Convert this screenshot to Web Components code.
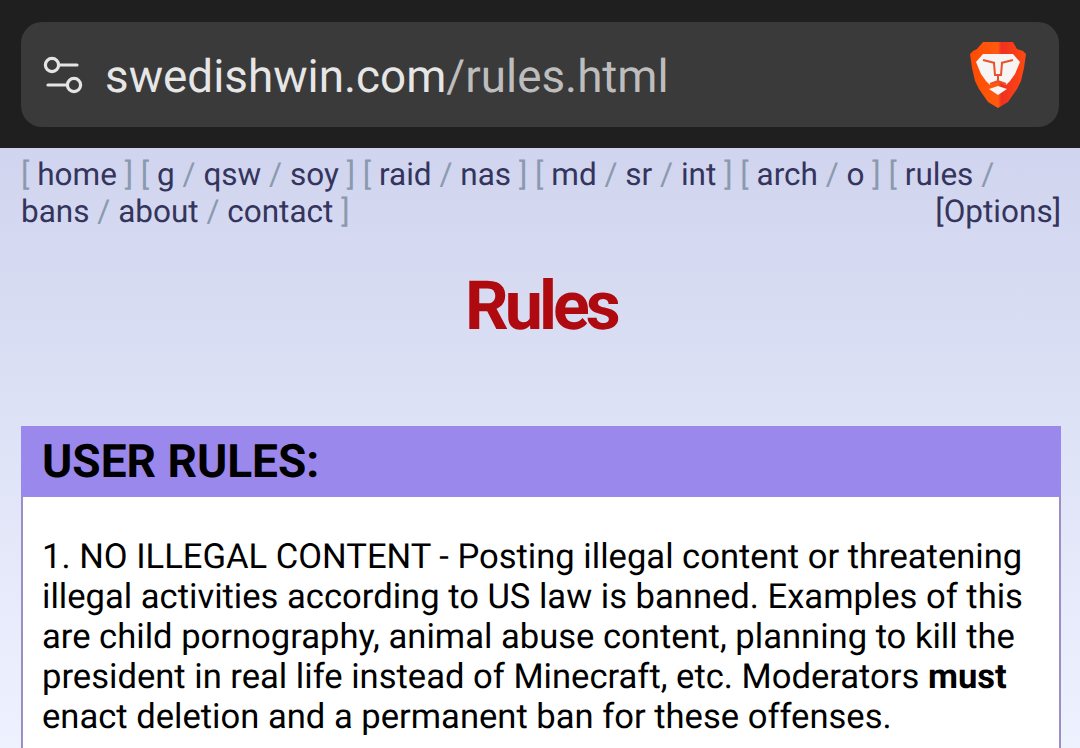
<!DOCTYPE html>
<html lang="en">
<head>
<meta charset="utf-8">
<title>Rules</title>
<style>
  html, body {
    margin: 0;
    padding: 0;
    height: 748px;
    overflow: hidden;
    font-family: Roboto, "Liberation Sans", sans-serif;
    text-rendering: geometricPrecision;
  }
</style>
</head>
<body>
<browser-bar url-host="swedishwin.com" url-path="/rules.html"></browser-bar>
<site-page>
  <board-nav></board-nav>
  <page-title>Rules</page-title>
  <rule-box heading="USER RULES:">
    1. NO ILLEGAL CONTENT - Posting illegal content or threatening illegal activities according to US law is banned. Examples of this are child pornography, animal abuse content, planning to kill the president in real life instead of Minecraft, etc. Moderators <b>must</b> enact deletion and a permanent ban for these offenses.
  </rule-box>
</site-page>

<script>
class BrowserBar extends HTMLElement {
  constructor() {
    super();
    this.shadowDOM = this.attachShadow({ mode: 'open' });
  }

  connectedCallback() {
    this.shadowDOM.innerHTML = `
      <style>
        :host {
          display: block;
          box-sizing: border-box;
          height: 148px;
          padding: 22px 21px 21px;
          background: #1f1f1f;
        }

        .field {
          display: flex;
          align-items: center;
          height: 105px;
          padding: 0 33px 0 22px;
          border-radius: 21px;
          background: #3a3a3a;
          font: 400 45.8px/50px Roboto, sans-serif;
          color: #e6e6e6;
        }

        .tune { flex: none; width: 40px; height: 40px; margin-right: 22px; }
        .url { flex: 1; white-space: nowrap; padding-top: 6px; }
        .path { color: #bdbdbd; }
        .lion { flex: none; width: 56px; height: 67px; }
      </style>
      <div class="field">
        <svg class="tune" viewBox="0 0 40 40" fill="none" stroke="#e4e4e4" stroke-width="3.2" stroke-linecap="round">
          <circle cx="9" cy="10" r="6.6"/>
          <path d="M16 10h18"/>
          <circle cx="31" cy="30" r="6.6"/>
          <path d="M5 30h19"/>
        </svg>
        <div class="url">${this.getAttribute('url-host')}<span class="path">${this.getAttribute('url-path')}</span></div>
        <svg class="lion" viewBox="0 0 56 67">
          <defs>
            <linearGradient id="shield" x1="0" x2="1" y1="0" y2="0">
              <stop offset="0" stop-color="#ff4a00"/>
              <stop offset=".5" stop-color="#ff5a10"/>
              <stop offset=".56" stop-color="#f03020"/>
              <stop offset="1" stop-color="#ff4a10"/>
            </linearGradient>
          </defs>
          <path fill="url(#shield)" d="M13 1h30l4 7 6 2 3 3-2 14-3 13-4 8-9 13-10 6-10-6-9-13-4-8-3-13L0 13l3-3 4-2z"/>
          <path fill="#f7f5f3" d="M13 13h30l7 8-5 12-5 7-4 4-8-4-8 4-4-4-5-7-5-12z"/>
          <path fill="#f7f5f3" d="M19 48l9-3 9 3-9 6z"/>
          <g fill="none" stroke="#e8512a" stroke-width="2">
            <path d="M13 19l12 3M43 19l-12 3"/>
            <path d="M24 22l1 12h6l1-12M28 34v6M20 43l8-3 8 3"/>
          </g>
        </svg>
      </div>
    `;
  }
}

class SitePage extends HTMLElement {
  constructor() {
    super();
    this.shadowDOM = this.attachShadow({ mode: 'open' });
    this.shadowDOM.innerHTML = `
      <style>
        :host {
          display: block;
          box-sizing: border-box;
          height: 600px;
          padding: 8px 19px 0 21px;
          overflow: hidden;
          background: linear-gradient(#d0d4ee, #eef2ff);
        }
      </style>
      <slot></slot>
    `;
  }
}

class BoardNav extends HTMLElement {
  constructor() {
    super();
    this.shadowDOM = this.attachShadow({ mode: 'open' });
  }

  connectedCallback() {
    const groups = [
      ['home'],
      ['g', 'qsw', 'soy'],
      ['raid', 'nas'],
      ['md', 'sr', 'int'],
      ['arch', 'o'],
      ['rules', 'bans', 'about', 'contact'],
    ];
    const links = groups.map((group) => {
      const items = group.map((name) => `<a>${name}</a>`).join(' <i>/</i> ');
      return `<i>[</i> ${items} <i>]</i>`;
    }).join(' ');

    this.shadowDOM.innerHTML = `
      <style>
        :host {
          display: block;
          font: 400 31.5px/37px Roboto, sans-serif;
          color: #34345c;
        }

        i { font-style: normal; color: #8a9aae; }
        .options { float: right; }
      </style>
      ${links}
      <span class="options">[Options]</span>
    `;
  }
}

class PageTitle extends HTMLElement {
  constructor() {
    super();
    this.shadowDOM = this.attachShadow({ mode: 'open' });
    this.shadowDOM.innerHTML = `
      <style>
        :host {
          display: block;
          margin: 38px 0 82px;
          text-align: center;
          font: 700 68px/76px Roboto, sans-serif;
          letter-spacing: -3.9px;
          color: #af0a0f;
        }
      </style>
      <slot></slot>
    `;
  }
}

class RuleBox extends HTMLElement {
  constructor() {
    super();
    this.shadowDOM = this.attachShadow({ mode: 'open' });
  }

  connectedCallback() {
    this.shadowDOM.innerHTML = `
      <style>
        :host {
          display: block;
          border: 2px solid #9a8fc4;
          border-top: 0;
          background: #fff;
        }

        h2 {
          margin: 0 -2px;
          padding: 0 0 0 21px;
          height: 71px;
          background: #9a88ec;
          font: 700 46px/73px Roboto, sans-serif;
          color: #000;
        }

        .body {
          padding: 40px 19px 60px;
          font: 400 34.6px/40px Roboto, sans-serif;
          color: #000;
        }
      </style>
      <h2>${this.getAttribute('heading')}</h2>
      <div class="body"><slot></slot></div>
    `;
  }
}

customElements.define('browser-bar', BrowserBar);
customElements.define('site-page', SitePage);
customElements.define('board-nav', BoardNav);
customElements.define('page-title', PageTitle);
customElements.define('rule-box', RuleBox);
</script>
</body>
</html>
